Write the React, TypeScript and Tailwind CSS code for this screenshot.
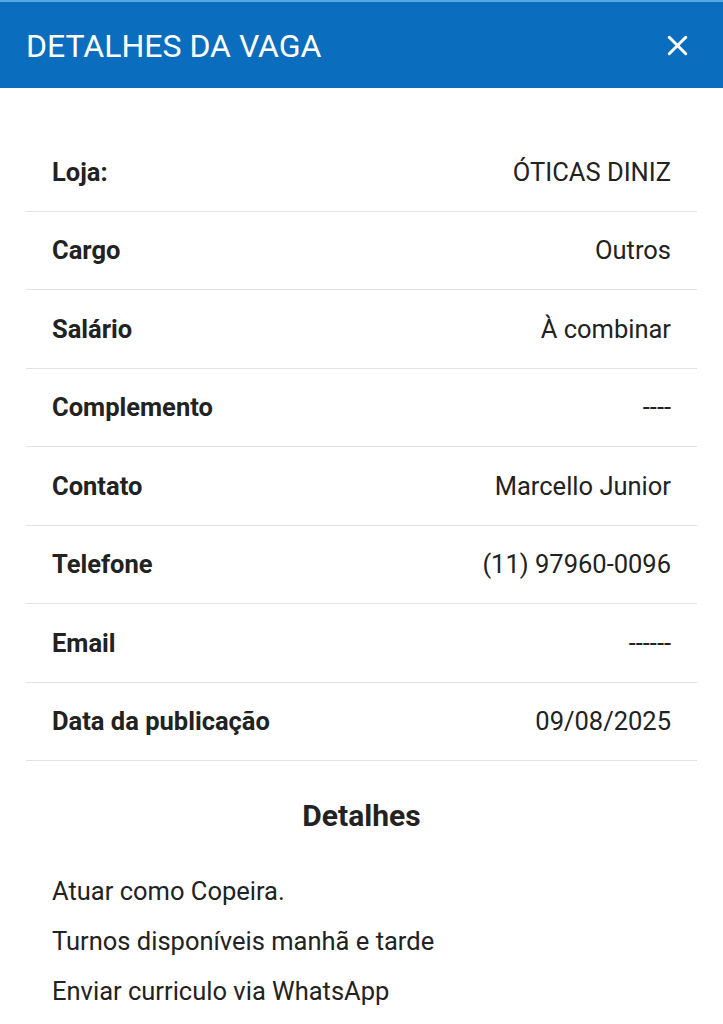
import { X } from "lucide-react";

const rows: [string, string][] = [
  ["Loja:", "ÓTICAS DINIZ"],
  ["Cargo", "Outros"],
  ["Salário", "À combinar"],
  ["Complemento", "----"],
  ["Contato", "Marcello Junior"],
  ["Telefone", "(11) 97960-0096"],
  ["Email", "------"],
  ["Data da publicação", "09/08/2025"],
];

const details = [
  "Atuar como Copeira.",
  "Turnos disponíveis manhã e tarde",
  "Enviar curriculo via WhatsApp",
];

export default function App() {
  return (
    <div
      className="w-[723px] h-[1024px] overflow-hidden bg-white text-[#222]"
      style={{ fontFamily: "Roboto, 'Noto Sans', sans-serif" }}
    >
      {/* Header */}
      <div className="h-[88px] bg-[#0a6dbd] border-t-2 border-[#5aa8e0] flex items-center justify-between pl-[26px] pr-[29px]">
        <h1 className="text-[32px] text-white pt-[1px]">DETALHES DA VAGA</h1>
        <X className="w-[33px] h-[33px] text-white" strokeWidth={2.2} />
      </div>

      {/* Info rows */}
      <div className="px-[26px] pt-[45px]">
        {rows.map(([label, value]) => (
          <div
            key={label}
            className="h-[78.5px] flex items-center justify-between px-[26px] border-b border-[#e2e2e2] text-[25.5px]"
          >
            <span className="font-bold">{label}</span>
            <span>{value}</span>
          </div>
        ))}
      </div>

      {/* Details */}
      <h2 className="text-center font-bold text-[30px] mt-[32px]">Detalhes</h2>
      <div className="px-[52px] pt-[38px] flex flex-col gap-[20px] text-[25.5px]">
        {details.map((d) => (
          <p key={d} className="leading-[30px]">
            {d}
          </p>
        ))}
      </div>
    </div>
  );
}
